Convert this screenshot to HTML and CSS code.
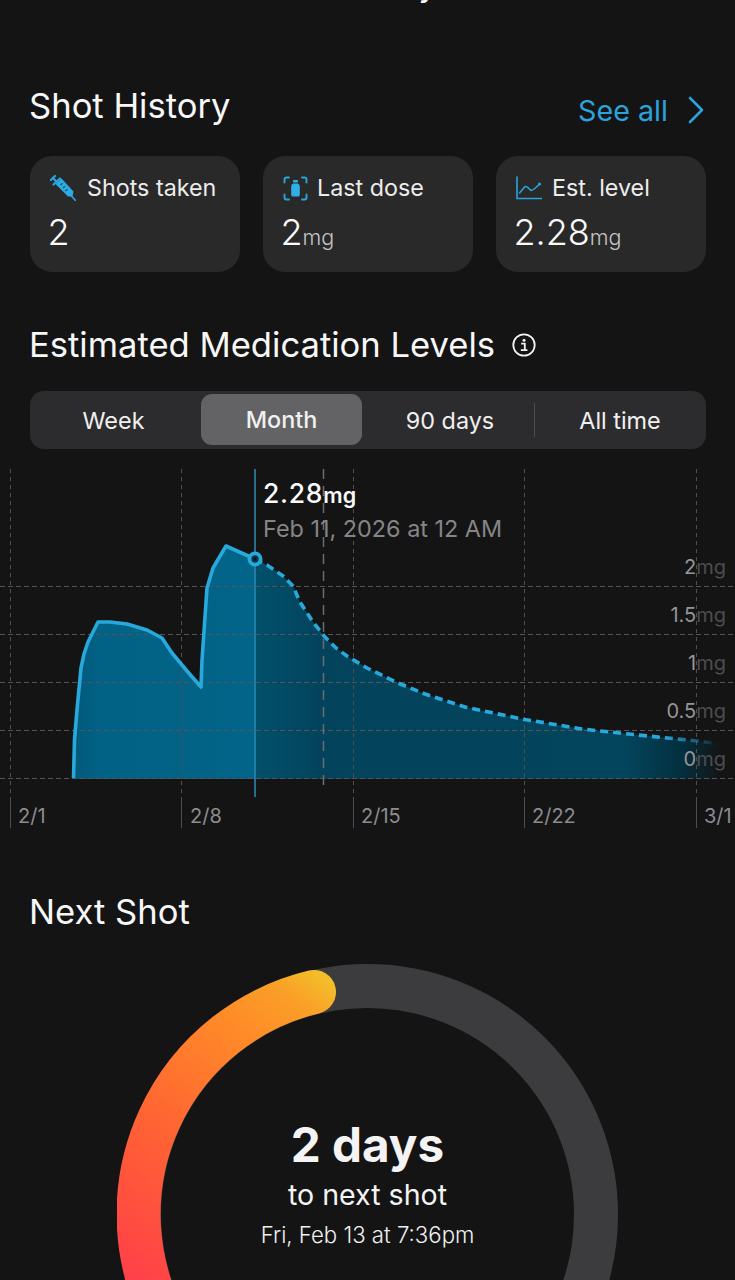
FILE: index.html
```html
<!DOCTYPE html>
<html lang="en">
<head>
<meta charset="utf-8">
<title>Shot History</title>
<link rel="stylesheet" href="styles.css">
</head>
<body>
<main class="page">
  <div class="top-title">Summary</div>

  <section class="section history">
    <header class="row-head">
      <h2 class="heading">Shot History</h2>
      <a class="see-all">See all
        <svg class="chev" viewBox="0 0 18 28" width="18" height="28"><path d="M3 2 L15 14 L3 26" fill="none" stroke="#2ba3dc" stroke-width="2.6" stroke-linecap="round" stroke-linejoin="round"/></svg>
      </a>
    </header>
    <div class="cards">
      <div class="card">
        <div class="card-top">
          <svg class="ico" viewBox="0 0 26 26" width="26" height="26">
            <g fill="none" stroke="#27a5dc" stroke-linecap="round" stroke-linejoin="round">
              <path d="M0.8 5 L5 1" stroke-width="2.2"/>
              <path d="M3 3 L8 8" stroke-width="2.2"/>
              <path d="M3.5 9.5 L10 3.5" stroke-width="2.2"/>
              <path d="M21 20.5 L25.5 25.5" stroke-width="1.6"/>
            </g>
            <path d="M5.5 9 L11.5 3.5 L23.5 16.5 L22.5 21.5 L18 21.5 Z" fill="#2cabe2"/>
            <path d="M10.5 10 L12.5 8.2 M13 13 L15 11.2 M15.5 16 L17.5 14.2" stroke="#14566f" stroke-width="1.2" fill="none"/>
          </svg>
          <span class="card-label">Shots taken</span>
        </div>
        <div class="value">2</div>
      </div>
      <div class="card">
        <div class="card-top narrow">
          <svg class="ico" viewBox="0 0 25 25" width="25" height="25">
            <path d="M1.5 6.5 V3.5 Q1.5 1.5 3.5 1.5 H6 M19 1.5 H21.5 Q23.5 1.5 23.5 3.5 V6.5 M23.5 18.5 V21.5 Q23.5 23.5 21.5 23.5 H19 M6 23.5 H3.5 Q1.5 23.5 1.5 21.5 V18.5" fill="none" stroke="#27a5dc" stroke-width="1.9" stroke-linecap="round"/>
            <rect x="10" y="4" width="5" height="2.6" rx="0.8" fill="#30aee6"/>
            <path d="M10 7.4 H15 Q16.8 8.5 16.8 10.5 V18.8 Q16.8 20.4 15.4 20.4 H9.6 Q8.2 20.4 8.2 18.8 V10.5 Q8.2 8.5 10 7.4 Z" fill="#30aee6"/>
          </svg>
          <span class="card-label">Last dose</span>
        </div>
        <div class="value">2<span class="unit">mg</span></div>
      </div>
      <div class="card">
        <div class="card-top wide">
          <svg class="ico" viewBox="0 0 26 24" width="26" height="24">
            <path d="M1 1 V22.5 H25.5" fill="none" stroke="#27a5dc" stroke-width="1.6" stroke-linecap="round"/>
            <path d="M3.5 17 L9 10.5 Q11 10 15 14.5 Q18 14 23.5 8" fill="none" stroke="#27a5dc" stroke-width="1.6" stroke-linejoin="round" stroke-linecap="round"/>
            <circle cx="23.5" cy="8" r="1.5" fill="#27a5dc"/>
          </svg>
          <span class="card-label">Est. level</span>
        </div>
        <div class="value">2.28<span class="unit">mg</span></div>
      </div>
    </div>
  </section>

  <section class="section levels">
    <header class="title-row">
      <h2 class="heading">Estimated Medication Levels</h2>
      <svg class="info" viewBox="0 0 24 24" width="24" height="24">
        <circle cx="12" cy="12" r="10.7" fill="none" stroke="#f2f2f2" stroke-width="1.8"/>
        <circle cx="12" cy="7.2" r="1.5" fill="#f2f2f2"/>
        <path d="M9.2 10.6 H12.8 V17 M8.8 17.2 H15.4" fill="none" stroke="#f2f2f2" stroke-width="1.8"/>
      </svg>
    </header>
    <div class="segment">
      <div class="seg">Week</div>
      <div class="seg seg-active">Month</div>
      <div class="seg">90 days</div>
      <div class="seg seg-last">All time</div>
    </div>
  </section>

  <svg class="chart" viewBox="0 460 735 370" width="735" height="370">
    <defs>
      <linearGradient id="fillRight" gradientUnits="userSpaceOnUse" x1="255" y1="0" x2="735" y2="0">
        <stop offset="0" stop-color="#02506c"/>
        <stop offset="0.14" stop-color="#03435b"/>
        <stop offset="0.77" stop-color="#03455c"/>
        <stop offset="0.89" stop-color="#032f3e"/>
        <stop offset="0.97" stop-color="#141415"/>
      </linearGradient>
      <linearGradient id="fillLeft" gradientUnits="userSpaceOnUse" x1="73" y1="0" x2="255" y2="0">
        <stop offset="0" stop-color="#02587a"/>
        <stop offset="0.15" stop-color="#026286"/>
        <stop offset="1" stop-color="#026488"/>
      </linearGradient>
      <linearGradient id="fade" gradientUnits="userSpaceOnUse" x1="255" y1="0" x2="735" y2="0">
        <stop offset="0" stop-color="#27a9dc"/>
        <stop offset="0.85" stop-color="#27a9dc"/>
        <stop offset="0.97" stop-color="#27a9dc" stop-opacity="0"/>
      </linearGradient>
    </defs>

    <path class="area" fill="url(#fillLeft)" d="M73 779 L74.5 740 L77 710 L81 668 L84 654 L88 642 L98 622 L110 622 L127 624 L147 630 L162 638 L172 653 L187 671 L201 687 L202 660 L207 588 L213 568 L226 546 L255 559 V779 Z"/>
    <path class="area" fill="url(#fillRight)" d="M255 559 L267 565 L283 576 L293 586 L300 602 L313 622 L325 637 L336 648 L347 656 L367 668 L398 683 L425 694 L465 707 L522 719 L582 729 L638 735 L698 741 L735 745 V779 H255 Z"/>

    <g class="grid-h">
      <path d="M0 586.5 H735"/>
      <path d="M0 634.5 H735"/>
      <path d="M0 682.5 H735"/>
      <path d="M0 730.5 H735"/>
      <path d="M0 778.5 H735"/>
    </g>
    <g class="grid-v">
      <path d="M10.5 469 V797"/>
      <path d="M181.5 469 V797"/>
      <path d="M353.5 469 V797"/>
      <path d="M524.5 469 V797"/>
      <path d="M696.5 469 V797"/>
    </g>
    <g class="tick">
      <path d="M10.5 797 V828"/>
      <path d="M181.5 797 V828"/>
      <path d="M353.5 797 V828"/>
      <path d="M524.5 797 V828"/>
      <path d="M696.5 797 V828"/>
    </g>
    <path class="today" d="M323.5 469 V790"/>

    <path class="line" d="M73.5 778 L74.5 740 L77 710 L81 668 L84 654 L88 642 L98 622 L110 622 L127 624 L147 630 L162 638 L172 653 L187 671 L201 687 L202 660 L207 588 L213 568 L226 546 L255 559"/>
    <path class="line-dash" d="M255 559 L267 565 L283 576 L293 586 L300 602 L313 622 L325 637 L336 648 L347 656 L367 668 L398 683 L425 694 L465 707 L522 719 L582 729 L638 735 L698 741 L722 744"/>
    <path class="cursor" d="M255 469 V797"/>
    <circle class="dot" cx="255" cy="559" r="5.6"/>
    <circle class="dot-in" cx="255" cy="559" r="1.8"/>

    <text class="tip-val" x="263" y="503">2.28<tspan class="tip-unit">mg</tspan></text>
    <text class="tip-date" x="263" y="537">Feb 11, 2026 at 12 AM</text>

    <text class="y-lab" x="726" y="574">2<tspan class="y-unit">mg</tspan></text>
    <text class="y-lab" x="726" y="622">1.5<tspan class="y-unit">mg</tspan></text>
    <text class="y-lab" x="726" y="670">1<tspan class="y-unit">mg</tspan></text>
    <text class="y-lab" x="726" y="718">0.5<tspan class="y-unit">mg</tspan></text>
    <text class="y-lab" x="726" y="766">0<tspan class="y-unit">mg</tspan></text>

    <text class="x-lab" x="18" y="823">2/1</text>
    <text class="x-lab" x="190" y="823">2/8</text>
    <text class="x-lab" x="361" y="823">2/15</text>
    <text class="x-lab" x="532" y="823">2/22</text>
    <text class="x-lab" x="704" y="823">3/1</text>
  </svg>

  <section class="section next">
    <h2 class="heading">Next Shot</h2>
    <div class="ring-wrap">
      <svg class="ring" viewBox="0 0 501 501" width="501" height="501">
        <defs>
          <linearGradient id="ringGrad" gradientUnits="userSpaceOnUse" x1="10" y1="320" x2="225" y2="25">
            <stop offset="0" stop-color="#ff3f4a"/>
            <stop offset="0.4" stop-color="#ff6333"/>
            <stop offset="0.74" stop-color="#ff8a28"/>
            <stop offset="0.9" stop-color="#fa9f27"/>
            <stop offset="1" stop-color="#f2bf2a"/>
          </linearGradient>
        </defs>
        <circle cx="250.5" cy="250.5" r="228.5" fill="none" stroke="#3c3c3e" stroke-width="44"/>
        <path d="M47 355 A228.5 228.5 0 0 1 197 28" fill="none" stroke="url(#ringGrad)" stroke-width="44" stroke-linecap="round"/>
      </svg>
      <div class="ring-text">
        <div class="days">2 days</div>
        <div class="to-next">to next shot</div>
        <div class="when">Fri, Feb 13 at 7:36pm</div>
      </div>
    </div>
  </section>
</main>
</body>
</html>
```
FILE: styles.css
```css
* { box-sizing: border-box; }
html, body { margin: 0; padding: 0; background: #141415; }
body { height: 1280px; overflow: hidden; font-family: Inter, "Liberation Sans", sans-serif; color: #f5f5f5; }
.page { display: flex; flex-direction: column; height: 1280px; overflow: hidden; }
.top-title { margin-top: -32px; height: 36px; line-height: 36px; text-align: center; font-size: 30px; font-weight: 500; color: #f5f5f5; flex: none; }
.section { padding: 0 29px 0 30px; flex: none; }
.history { margin-top: 78px; }
.row-head { display: flex; justify-content: space-between; align-items: center; height: 48px; }
.heading { margin: -1px 0 1px -1px; font-size: 34.6px; line-height: 48px; font-weight: 400; color: #f7f7f7; }
.see-all { display: flex; align-items: center; gap: 19px; font-size: 28.7px; color: #2ba3dc; padding-top: 8px; margin-right: 1px; }
.chev { display: block; }
.cards { display: grid; grid-template-columns: repeat(3, 210px); gap: 23px; margin-top: 26px; }
.card { height: 116px; border-radius: 22px; background: #29292a; padding: 18px 19px 0 20px; }
.card-top { display: flex; align-items: center; gap: 11px; height: 28px; }
.card-top.narrow { gap: 9px; }
.card-top.wide { gap: 10px; }
.ico { display: block; flex: none; }
.card-label { font-size: 23.3px; line-height: 28px; color: #ececec; }
.value { margin: 7px 0 0 -2.5px; font-size: 36px; line-height: 46px; font-weight: 300; color: #fafafa; }
.unit { font-size: 21.5px; color: #c4c4c4; }
.levels { margin-top: 49px; }
.title-row { display: flex; align-items: center; gap: 17px; height: 48px; }
.info { display: block; flex: none; }
.segment { display: grid; grid-template-columns: 167px 169px 168px 172px; height: 58px; margin-top: 22px; border-radius: 14px; background: #2c2c2e; }
.seg { display: flex; align-items: center; justify-content: center; font-size: 23.4px; color: #f0f0f0; }
.seg-active { margin: 3px 4px 4px 4px; border-radius: 11px; background: #636366; font-weight: 500; }
.seg-last { position: relative; }
.seg-last::before { content: ""; position: absolute; left: 0; top: 12px; bottom: 12px; width: 1px; background: #4c4c4e; }
.chart { display: block; margin-top: 11px; flex: none; }
.grid-h path { stroke: #555557; stroke-width: 1; stroke-dasharray: 5 3; fill: none; }
.grid-v path { stroke: #505052; stroke-width: 1; stroke-dasharray: 4 4; fill: none; }
.tick path { stroke: #4e4e50; stroke-width: 1; fill: none; }
.today { stroke: #6c6c6e; stroke-width: 1.5; stroke-dasharray: 10 7; fill: none; }
.line { fill: none; stroke: #27a9dc; stroke-width: 3.6; stroke-linejoin: round; }
.line-dash { fill: none; stroke: url(#fade); stroke-width: 3.6; stroke-dasharray: 8 5; }
.cursor { stroke: #2787ad; stroke-width: 1.6; fill: none; }
.dot { fill: #0d3a4c; stroke: #27a9dc; stroke-width: 3.8; }
.dot-in { fill: #10191e; }
.tip-val { font-size: 26.5px; font-weight: 500; fill: #fafafa; letter-spacing: 0.7px; }
.tip-unit { font-size: 21.5px; font-weight: 600; letter-spacing: 0.3px; }
.tip-date { font-size: 23.4px; fill: #858587; }
.y-lab { font-size: 20px; fill: #959597; text-anchor: end; }
.y-unit { fill: #4d4d4f; }
.x-lab { font-size: 20px; fill: #8c8c8e; }
.next { margin-top: 58px; }
.ring-wrap { position: relative; width: 501px; height: 501px; margin: 29px 0 0 87px; flex: none; }
.ring { display: block; }
.ring-text { position: absolute; left: 0; right: 0; top: 151px; display: flex; flex-direction: column; align-items: center; }
.days { font-size: 47.6px; line-height: 60px; font-weight: 700; color: #f4f4f4; }
.to-next { font-size: 28.6px; line-height: 36px; margin-top: 2px; color: #f4f4f4; }
.when { font-size: 22.2px; line-height: 28px; margin-top: 8px; color: #efefef; font-weight: 300; }
```
